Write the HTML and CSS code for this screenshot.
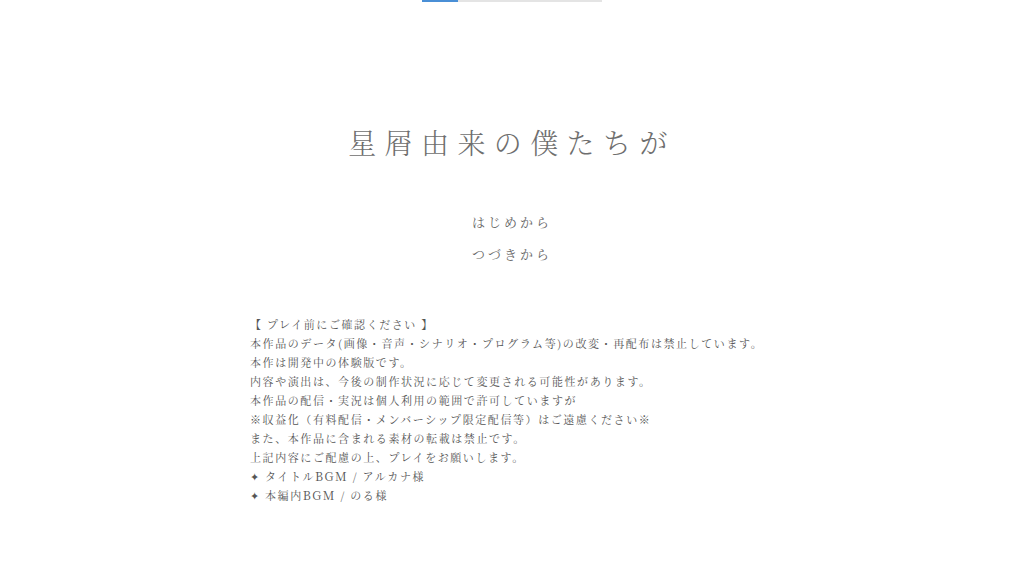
FILE: index.html
```html
<!DOCTYPE html>
<html lang="ja">
<head>
    <meta charset="UTF-8">
    <meta name="viewport" content="width=device-width, initial-scale=1.0">
    <title>星屑由来の僕たちが</title>
    <link rel="stylesheet" href="styles.css">
</head>
<body>
    <div class="loader">
        <div class="loader-fill"></div>
    </div>

    <h1 class="title">星屑由来の僕たちが</h1>

    <nav class="menu">
        <a class="menu-item" href="#">はじめから</a>
        <a class="menu-item" href="#">つづきから</a>
    </nav>

    <div class="notice">
        <p>【 プレイ前にご確認ください 】</p>
        <p>本作品のデータ(画像・音声・シナリオ・プログラム等)の改変・再配布は禁止しています。</p>
        <p>本作は開発中の体験版です。</p>
        <p>内容や演出は、今後の制作状況に応じて変更される可能性があります。</p>
        <p>本作品の配信・実況は個人利用の範囲で許可していますが</p>
        <p>※収益化（有料配信・メンバーシップ限定配信等）はご遠慮ください※</p>
        <p>また、本作品に含まれる素材の転載は禁止です。</p>
        <p>上記内容にご配慮の上、プレイをお願いします。</p>
        <p>✦ タイトル<span class="latin">BGM</span> / アルカナ様</p>
        <p>✦ 本編内<span class="latin">BGM</span> / のる様</p>
    </div>
</body>
</html>
```

FILE: styles.css
```css
body {
    margin: 0;
    background-color: #ffffff;
    color: #555555;
    font-family: "Noto Serif CJK JP", "Liberation Serif", "Noto Sans CJK JP", serif;
    display: flex;
    flex-direction: column;
    align-items: center;
}

/* loading bar at the top */
.loader {
    width: 180px;
    height: 2px;
    background-color: #e4e4e4;
}

.loader-fill {
    width: 36px;
    height: 100%;
    background-color: #4a8fd6;
}

.title {
    margin: 126px 0 0;
    font-size: 28px;
    font-weight: 300;
    line-height: 1;
    letter-spacing: 8.4px;
    color: #6e6e6e;
}

.menu {
    margin-top: 50px;
    display: flex;
    flex-direction: column;
    align-items: center;
}

.menu-item {
    font-size: 13px;
    line-height: 32px;
    letter-spacing: 3px;
    color: #666666;
    text-decoration: none;
}

.notice {
    margin-top: 45px;
    width: 524px;
    font-size: 11px;
    line-height: 19px;
    letter-spacing: 1.58px;
    color: #555555;
}

.notice p {
    margin: 0;
    height: 19px;
}

.latin {
    font-size: 12px;
    line-height: 1;
}
```
